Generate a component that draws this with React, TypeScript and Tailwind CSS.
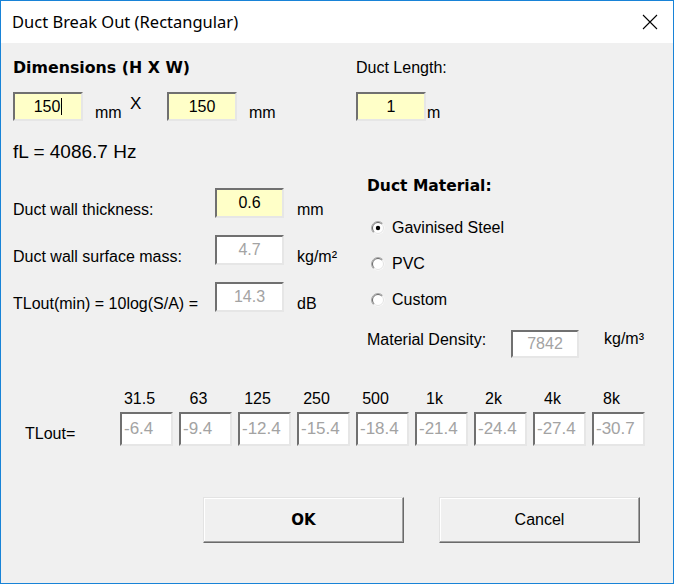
const FREQS = [
  { label: '31.5', value: '-6.4' },
  { label: '63', value: '-9.4' },
  { label: '125', value: '-12.4' },
  { label: '250', value: '-15.4' },
  { label: '500', value: '-18.4' },
  { label: '1k', value: '-21.4' },
  { label: '2k', value: '-24.4' },
  { label: '4k', value: '-27.4' },
  { label: '8k', value: '-30.7' }
]

const sunken =
  'border-2 border-t-[#707070] border-l-[#707070] border-b-[#e6e6e6] border-r-[#e6e6e6]'

function Field({
  value,
  yellow,
  caret,
  className
}: {
  value: string
  yellow?: boolean
  caret?: boolean
  className: string
}) {
  return (
    <div
      className={`${sunken} ${className} flex items-center justify-center ${
        yellow ? 'bg-[#ffffc8] text-black' : 'bg-white text-[#a3a3a3]'
      }`}
    >
      <span className="leading-none">{value}</span>
      {caret && <span className="w-px h-[17px] bg-black ml-px" />}
    </div>
  )
}

function Radio({ checked, label }: { checked?: boolean; label: string }) {
  return (
    <div className="flex items-center h-4">
      <svg width="14" height="14" viewBox="0 0 14 14" className="ml-[4px]">
        <circle cx="7" cy="7" r="6.5" fill="#fff" />
        <path d="M2.4 11.6 A6.5 6.5 0 0 1 11.6 2.4" stroke="#a8a8a8" strokeWidth="1" fill="none" />
        <path d="M3.1 10.9 A5.5 5.5 0 0 1 10.9 3.1" stroke="#6a6a6a" strokeWidth="1" fill="none" />
        <path d="M10.9 3.1 A5.5 5.5 0 0 1 3.1 10.9" stroke="#e3e3e3" strokeWidth="1" fill="none" />
        {checked && <circle cx="7" cy="7" r="2.2" fill="#000" />}
      </svg>
      <span className="ml-[7px]">{label}</span>
    </div>
  )
}

export default function App() {
  return (
    <div className="w-[674px] h-[584px] border border-[#1883d7] bg-[#f0f0f0] flex flex-col font-['Liberation_Sans',Arial,sans-serif] text-[16px] text-black overflow-hidden">
      {/* Title bar */}
      <div className="h-[42px] bg-white flex items-center justify-between pl-[11px] pr-[15px] shrink-0">
        <span className="font-['Noto_Sans',sans-serif] text-[16.5px] text-black">Duct Break Out (Rectangular)</span>
        <svg width="16" height="16" viewBox="0 0 16 16">
          <path d="M1 1 L15 15 M15 1 L1 15" stroke="#000" strokeWidth="1.1" />
        </svg>
      </div>

      <div className="flex flex-col pl-[12px]">
        {/* Dimensions + length */}
        <div className="flex h-[132px]">
          <div className="w-[343px] flex flex-col pt-[16px]">
            <div className="h-[18px] leading-[18px] font-['DejaVu_Sans',sans-serif] font-bold text-[15.8px]">
              Dimensions (H X W)
            </div>
            <div className="flex mt-[15px] h-[29px]">
              <Field value="150" yellow caret className="w-[70px] h-[29px]" />
              <span className="w-[35px] ml-[12px] self-end leading-[16px]">mm</span>
              <span className="w-[37px] self-start pt-[4px] leading-[16px] text-[17px]">X</span>
              <Field value="150" yellow className="w-[70px] h-[29px]" />
              <span className="ml-[12px] self-end leading-[16px]">mm</span>
            </div>
            <div className="mt-[22px] h-[18px] leading-[18px] text-[19px]">fL = 4086.7 Hz</div>
          </div>
          <div className="flex flex-col pt-[16px]">
            <div className="h-[18px] leading-[18px]">Duct Length:</div>
            <div className="flex mt-[15px] h-[29px]">
              <Field value="1" yellow className="w-[70px] h-[29px]" />
              <span className="ml-px self-end leading-[16px]">m</span>
            </div>
          </div>
        </div>

        {/* Wall + material */}
        <div className="flex h-[216px]">
          <div className="w-[354px] flex flex-col pt-[13px] gap-[17px]">
            {[
              { label: 'Duct wall thickness:', value: '0.6', yellow: true, unit: 'mm' },
              { label: 'Duct wall surface mass:', value: '4.7', yellow: false, unit: 'kg/m²' },
              { label: 'TLout(min) = 10log(S/A) =', value: '14.3', yellow: false, unit: 'dB' }
            ].map((row) => (
              <div key={row.label} className="flex items-end h-[30px]">
                <span className="w-[202px] leading-[16px]">{row.label}</span>
                <Field value={row.value} yellow={row.yellow} className="w-[69px] h-[30px]" />
                <span className="ml-[13px] leading-[16px]">{row.unit}</span>
              </div>
            ))}
          </div>
          <div className="flex flex-col pt-[2px]">
            <div className="h-[18px] leading-[18px] font-['DejaVu_Sans',sans-serif] font-bold text-[15.5px]">
              Duct Material:
            </div>
            <div className="flex flex-col gap-[20px] mt-[25px]">
              <Radio checked label="Gavinised Steel" />
              <Radio label="PVC" />
              <Radio label="Custom" />
            </div>
            <div className="flex mt-[22px] h-[28px]">
              <span className="w-[144px] pt-[2px] leading-[16px]">Material Density:</span>
              <Field value="7842" className="w-[68px] h-[28px]" />
              <span className="ml-[25px] pt-[1px] leading-[16px]">kg/m³</span>
            </div>
          </div>
        </div>

        {/* TLout per band */}
        <div className="flex">
          <span className="w-[107px] pl-[12px] self-end mb-[4px] leading-[16px]">TLout=</span>
          <div className="flex gap-[6px]">
            {FREQS.map((f) => (
              <div key={f.label} className="w-[53px] flex flex-col">
                <span className="h-4 leading-[16px] text-center pr-[14px]">{f.label}</span>
                <div
                  className={`${sunken} mt-[5px] h-[34px] bg-white text-[#a3a3a3] text-[17px] flex items-center pl-[2px]`}
                >
                  {f.value}
                </div>
              </div>
            ))}
          </div>
        </div>

        {/* Buttons */}
        <div className="flex mt-[51px] ml-[190px] gap-[35px]">
          {['OK', 'Cancel'].map((b) => (
            <button
              key={b}
              className={`w-[201px] h-[46px] bg-[#f0f0f0] border border-t-[#e3e3e3] border-l-[#e3e3e3] border-b-[#6a6a6a] border-r-[#6a6a6a] shadow-[inset_-1px_-1px_0_#a0a0a0,inset_1px_1px_0_#ffffff] ${
                b === 'OK' ? "font-['DejaVu_Sans',sans-serif] font-bold text-[15px]" : ''
              }`}
            >
              {b}
            </button>
          ))}
        </div>
      </div>
    </div>
  )
}
